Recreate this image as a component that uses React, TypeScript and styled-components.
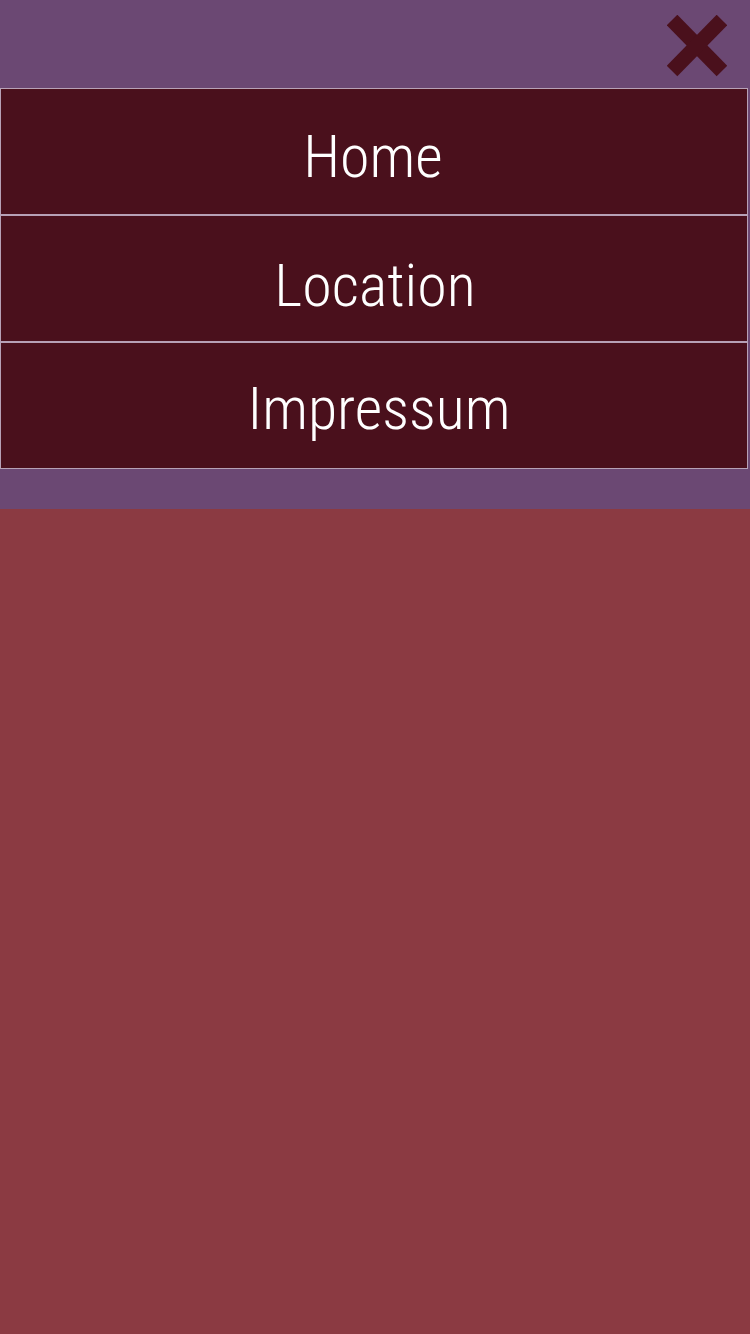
import styled, { createGlobalStyle } from 'styled-components'

const GlobalStyle = createGlobalStyle`
  html, body {
    margin: 0;
    padding: 0;
    background: #8b3a42;
  }
  * {
    box-sizing: border-box;
  }
`

const Page = styled.div`
  width: 750px;
  min-height: 1334px;
  background: #8b3a42;
  font-family: 'Roboto Condensed', Roboto, 'Liberation Sans', sans-serif;
`

const MenuPanel = styled.nav`
  background: #6b4873;
  padding-bottom: 40px;
`

const TopBar = styled.div`
  height: 88px;
  display: flex;
  justify-content: flex-end;
  align-items: flex-start;
  padding: 15px 23px 0 0;
`

const CloseButton = styled.button`
  border: 0;
  padding: 0;
  background: none;
  width: 60px;
  height: 62px;
  cursor: pointer;
  display: block;
`

const MenuList = styled.ul`
  list-style: none;
  margin: 0 2px 0 0;
  padding: 0;
`

const MenuItem = styled.li`
  height: 127px;
  background: #4a101c;
  border: 1px solid #b7a1b6;
  display: flex;
  align-items: center;
  justify-content: center;
`

const MenuLink = styled.a<{ $dx: number; $dy: number }>`
  color: #ffffff;
  text-decoration: none;
  font-size: 60px;
  font-weight: 300;
  line-height: 1;
  transform: translate(${p => p.$dx}px, ${p => p.$dy}px);
`

const items = [
  { label: 'Home', dx: -1, dy: 5 },
  { label: 'Location', dx: 1, dy: 7 },
  { label: 'Impressum', dx: 5, dy: 3 },
]

const App = () => {
  return (
    <Page>
      <GlobalStyle />
      <MenuPanel>
        <TopBar>
          <CloseButton aria-label="Close menu">
            <svg width="60" height="62" viewBox="0 0 60 62">
              <line x1="5" y1="5" x2="55" y2="56" stroke="#4a101c" strokeWidth="15" />
              <line x1="55" y1="5" x2="5" y2="56" stroke="#4a101c" strokeWidth="15" />
            </svg>
          </CloseButton>
        </TopBar>
        <MenuList>
          {items.map(item => (
            <MenuItem key={item.label}>
              <MenuLink href="#" $dx={item.dx} $dy={item.dy}>{item.label}</MenuLink>
            </MenuItem>
          ))}
        </MenuList>
      </MenuPanel>
    </Page>
  )
}

export default App
